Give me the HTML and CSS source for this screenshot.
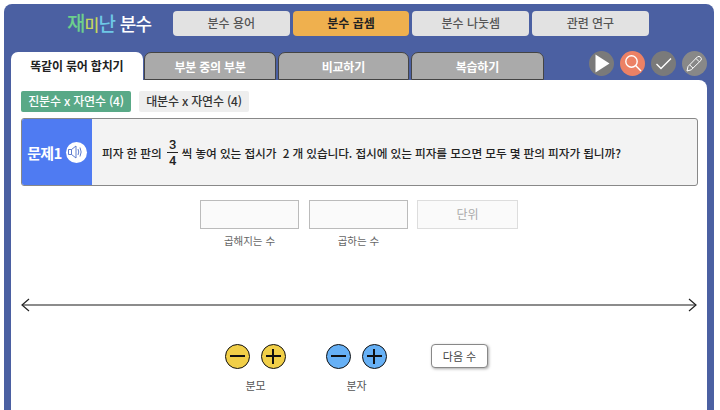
FILE: index.html
```html
<!DOCTYPE html>
<html lang="ko">
<head>
    <meta charset="UTF-8">
    <title>재미난 분수</title>
    <link rel="stylesheet" href="styles.css">
</head>
<body>
    <div class="frame">
        <header class="top">
            <div class="logo">
                <span class="c-green">재</span><span class="c-lime">미</span><span class="c-sky">난</span> <span class="c-white">분수</span>
            </div>
            <nav class="menu">
                <a class="menu-item">분수 용어</a>
                <a class="menu-item active">분수 곱셈</a>
                <a class="menu-item">분수 나눗셈</a>
                <a class="menu-item">관련 연구</a>
            </nav>
        </header>

        <div class="tabbar">
            <div class="tabs">
                <a class="tab active">똑같이 묶어 합치기</a>
                <a class="tab">부분 중의 부분</a>
                <a class="tab">비교하기</a>
                <a class="tab tab-last">복습하기</a>
            </div>
            <div class="tools">
                <button class="tool">
                    <svg viewBox="0 0 25 25" width="25" height="25"><path d="M6.5 3.5 L20.5 12.5 L6.5 21.5 Z" fill="#fff"/></svg>
                </button>
                <button class="tool tool-search">
                    <svg viewBox="0 0 25 25" width="25" height="25" fill="none" stroke="#fff" stroke-width="1.4"><circle cx="11.5" cy="10.5" r="5.7"/><path d="M15.6 14.6 L21 20"/></svg>
                </button>
                <button class="tool">
                    <svg viewBox="0 0 25 25" width="25" height="25" fill="none" stroke="#fff" stroke-width="1.4"><path d="M5.5 13 L10 17.5 L20 7.5"/></svg>
                </button>
                <button class="tool tool-light">
                    <svg viewBox="0 0 25 25" width="25" height="25" fill="none" stroke="#fff" stroke-width="1"><path d="M6 15.5 L15.5 5.8 Q17 4.8 18.6 6.2 Q20 7.8 19 9.3 L9.3 18.8 L5 20 Z"/><path d="M7.8 14 L11 17.2 M14 7.5 L17.2 10.7"/></svg>
                </button>
            </div>
        </div>

        <main class="panel">
            <div class="subtabs">
                <a class="subtab active">진분수 x 자연수 (4)</a>
                <a class="subtab">대분수 x 자연수 (4)</a>
            </div>

            <section class="question">
                <div class="q-label">
                    <span>문제1</span>
                    <span class="speaker">
                        <svg viewBox="0 0 20 20" width="20" height="20" fill="none" stroke="#4f6fc8" stroke-width="0.9"><path d="M2.5 7.5 H5.5 V12.5 H2.5 Z M5.5 7.5 L10 4 V16 L5.5 12.5"/><path d="M12 7 Q13.5 10 12 13 M14 5.5 Q16.3 10 14 14.5"/></svg>
                    </span>
                </div>
                <div class="q-text">
                    <span>피자 한 판의</span>
                    <span class="frac"><span class="num">3</span><span class="den">4</span></span>
                    <span>씩 놓여 있는 접시가 &nbsp;2 개 있습니다. 접시에 있는 피자를 모으면 모두 몇 판의 피자가 됩니까?</span>
                </div>
            </section>

            <div class="answers">
                <div class="field">
                    <div class="box"></div>
                    <label>곱해지는 수</label>
                </div>
                <div class="field">
                    <div class="box"></div>
                    <label>곱하는 수</label>
                </div>
                <div class="field field-unit">
                    <div class="box unit">단위</div>
                </div>
            </div>

            <div class="axis">
                <svg viewBox="0 0 676 14" width="676" height="14" fill="none" stroke="#222" stroke-width="1.2"><path d="M1 7 H675" stroke="#666" stroke-width="1.4"/><path d="M8 1 L1 7 L8 13 M668 1 L675 7 L668 13"/></svg>
            </div>

            <div class="controls">
                <div class="control">
                    <div class="pair">
                        <button class="round yellow"><span class="minus"></span></button>
                        <button class="round yellow"><span class="minus"></span><span class="vbar"></span></button>
                    </div>
                    <label>분모</label>
                </div>
                <div class="control">
                    <div class="pair">
                        <button class="round blue"><span class="minus"></span></button>
                        <button class="round blue"><span class="minus"></span><span class="vbar"></span></button>
                    </div>
                    <label>분자</label>
                </div>
                <button class="next">다음 수</button>
            </div>
        </main>
    </div>
</body>
</html>
```

FILE: styles.css
```css
html, body {
    margin: 0;
    height: 100%;
    overflow: hidden;
}

body {
    background: #fff;
    font-family: "Noto Sans CJK KR", "Noto Sans", sans-serif;
    color: #222;
}

.frame {
    height: 406px;
    margin: 4px 6px 0 4px;
    padding: 0 7px;
    background: #4b60a2;
    border-radius: 8px 8px 0 0;
    box-sizing: border-box;
}

.top {
    display: flex;
    height: 48px;
    padding-top: 7px;
    box-sizing: border-box;
}

.logo {
    width: 162px;
    padding-left: 56px;
    box-sizing: border-box;
    font-size: 19px;
    font-weight: 500;
    line-height: 24px;
    letter-spacing: -0.8px;
    white-space: nowrap;
}

.c-green { color: #6cd08c; font-size: 20px; }
.c-lime { color: #c2d65e; font-size: 16px; }
.c-sky { color: #6ec8e6; }
.c-white { color: #fff; font-size: 18px; }

.menu {
    display: flex;
    gap: 3px;
}

.menu-item {
    width: 116.7px;
    height: 25px;
    line-height: 24px;
    text-align: center;
    background: #e2e2e2;
    color: #555;
    border-radius: 4px;
    font-size: 12px;
    font-weight: 500;
}

.menu-item.active {
    background: #efb04e;
    color: #222;
    font-weight: 700;
}

.tabbar {
    display: flex;
    justify-content: space-between;
    height: 28px;
}

.tabs {
    display: flex;
    gap: 1.7px;
}

.tab {
    width: 131.6px;
    height: 28px;
    line-height: 27px;
    text-align: center;
    background: #aaa;
    color: #fff;
    border: 1px solid #444;
    border-radius: 7px 7px 0 0;
    box-sizing: border-box;
    font-size: 12px;
    font-weight: 700;
    letter-spacing: -0.2px;
}

.tab-last {
    width: 133px;
}

.tab.active {
    background: #fff;
    color: #222;
    border: 0;
}

.tools {
    display: flex;
    gap: 6px;
    height: 25px;
    margin-top: -1px;
}

.tool {
    width: 25px;
    height: 25px;
    padding: 0;
    border: 0;
    border-radius: 50%;
    background: #7a7a7a;
}

.tool svg {
    display: block;
}

.tool-search {
    background: #ec8165;
}

.tool-light {
    background: #888;
}

.panel {
    height: 330px;
    padding: 11px 10px 0;
    background: #fff;
    border-radius: 0 8px 0 0;
    box-sizing: border-box;
}

.subtabs {
    display: flex;
    gap: 8px;
}

.subtab {
    width: 110px;
    height: 21px;
    line-height: 20px;
    text-align: center;
    background: #eee;
    color: #333;
    border-radius: 2px;
    font-size: 12px;
    font-weight: 500;
    letter-spacing: -0.2px;
}

.subtab.active {
    background: #59a987;
    color: #fff;
}

.question {
    display: flex;
    height: 68px;
    margin-top: 6px;
    width: 677px;
    background: #f3f3f3;
    border: 1px solid #888;
    border-radius: 3px;
    box-sizing: border-box;
    overflow: hidden;
}

.q-label {
    display: flex;
    flex: none;
    align-items: center;
    justify-content: center;
    gap: 4px;
    width: 70px;
    background: #4f7bf2;
    color: #fff;
    font-size: 15px;
    font-weight: 700;
    letter-spacing: -0.6px;
}

.speaker {
    display: flex;
    align-items: center;
    justify-content: center;
    width: 21px;
    height: 21px;
    background: #fff;
    border-radius: 50%;
}

.q-text {
    display: flex;
    align-items: center;
    padding-left: 10px;
    font-size: 11.7px;
    font-weight: 500;
    letter-spacing: -0.1px;
    white-space: nowrap;
}

.frac {
    display: inline-flex;
    flex-direction: column;
    align-items: center;
    width: 12px;
    margin: 0 3px 0 5px;
    font-family: Roboto, sans-serif;
    font-size: 13px;
    line-height: 15px;
}

.num, .den {
    display: block;
}

.num {
    border-bottom: 1px solid #222;
    padding: 0 2px;
}

.answers {
    display: flex;
    gap: 10px;
    margin-top: 14px;
    padding-left: 179px;
}

.field {
    width: 99px;
    text-align: center;
}

.field-unit {
    margin-left: -1px;
}

.field label {
    display: block;
    margin-top: 4px;
    font-size: 10.5px;
    color: #666;
}

.box {
    height: 29px;
    background: #fafafa;
    border: 1px solid #bbb;
    box-sizing: border-box;
}

.unit {
    width: 101px;
    line-height: 26px;
    font-size: 12px;
    color: #aaa;
    border: 1.5px solid #ddd;
}

.axis {
    margin-top: 50px;
    height: 14px;
}

.axis svg {
    display: block;
}

.controls {
    display: flex;
    align-items: flex-start;
    margin-top: 32px;
    padding-left: 204px;
}

.control {
    width: 101px;
}

.control label {
    display: block;
    width: 61px;
    margin-top: 8px;
    text-align: center;
    font-size: 11px;
    color: #555;
}

.pair {
    display: flex;
    gap: 11px;
}

.round {
    position: relative;
    width: 25px;
    height: 25px;
    padding: 0;
    border: 1.5px solid #111;
    border-radius: 50%;
}

.yellow { background: #f1cf48; }
.blue { background: #66b0f5; }

.minus, .vbar {
    position: absolute;
    background: #111;
}

.minus {
    left: 4px;
    right: 4px;
    top: 10.2px;
    height: 1.6px;
}

.vbar {
    top: 4px;
    bottom: 4px;
    left: 10.2px;
    width: 1.6px;
}

.next {
    width: 57px;
    height: 24px;
    margin-left: 4px;
    padding: 0;
    font-family: inherit;
    font-size: 11px;
    color: #444;
    background: #fff;
    border: 1px solid #888;
    border-radius: 4px;
    box-shadow: 1px 1px 3px rgba(0, 0, 0, 0.35);
}
```
